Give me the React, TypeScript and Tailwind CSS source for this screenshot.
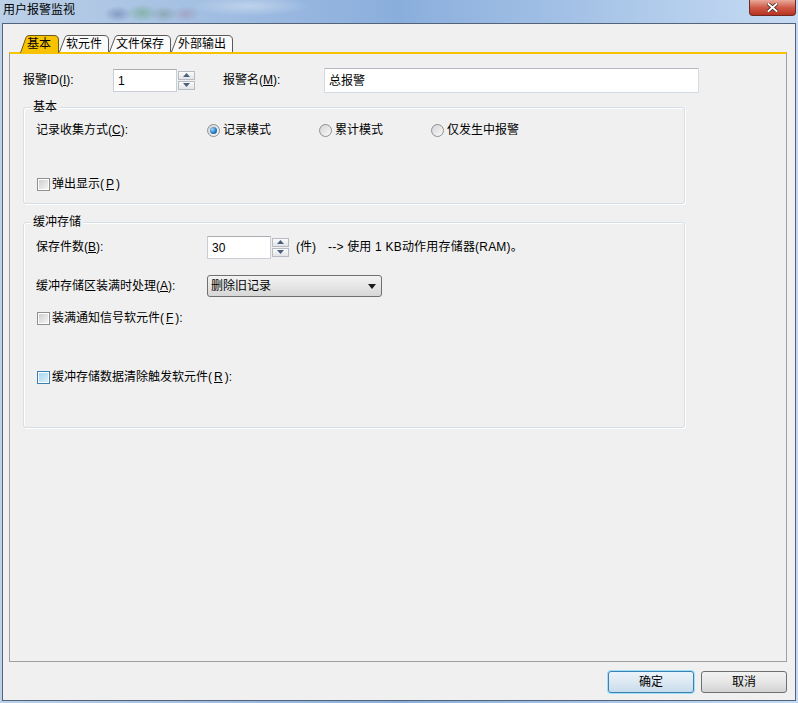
import React from 'react';

const Radio = ({ checked }: { checked?: boolean }) => (
    <span className="flex h-[13px] w-[13px] shrink-0 items-center justify-center rounded-full border border-[#8e8f8f] bg-gradient-to-br from-[#d4d4d4] to-[#fafafa]">
        {checked && (
            <span className="h-[7px] w-[7px] rounded-full bg-[radial-gradient(circle_at_35%_35%,#9ad9ff,#2a7cc0_55%,#0b3d73)]" />
        )}
    </span>
);

const Check = ({ hover }: { hover?: boolean }) => (
    <span
        className={`flex h-[13px] w-[13px] shrink-0 items-center justify-center border ${
            hover ? 'border-[#3c7fb1]' : 'border-[#8e8f8f]'
        } bg-white`}
    >
        <span
            className={`h-[9px] w-[9px] bg-gradient-to-br ${
                hover ? 'from-[#a9d8f2] to-[#d9effb]' : 'from-[#cfcfcf] to-[#f4f4f4]'
            }`}
        />
    </span>
);

const SpinBox = ({ value, width }: { value: string; width: string }) => (
    <div className={`flex h-[23px] ${width} items-stretch`}>
        <div className="flex flex-1 items-start border border-[#c9ced6] border-t-[#abadb3] bg-white pl-[4px] pt-[2px]">
            {value}
        </div>
        <div className="ml-[1px] flex w-[17px] flex-col gap-[1px] py-[2px]">
            <span className="flex flex-1 items-center justify-center border border-[#b7bcc3] bg-gradient-to-b from-[#fbfbfb] to-[#e2e4e8]">
                <svg width="7" height="4" viewBox="0 0 7 4">
                    <path d="M0 4 L3.5 0 L7 4 Z" fill="#4c5f7e" />
                </svg>
            </span>
            <span className="flex flex-1 items-center justify-center border border-[#b7bcc3] bg-gradient-to-b from-[#fbfbfb] to-[#e2e4e8]">
                <svg width="7" height="4" viewBox="0 0 7 4">
                    <path d="M0 0 L3.5 4 L7 0 Z" fill="#4c5f7e" />
                </svg>
            </span>
        </div>
    </div>
);

const Tab = ({
    label,
    width,
    selected,
}: {
    label: string;
    width: number;
    selected?: boolean;
}) => (
    <div className="relative flex h-[17px] shrink-0 items-center pl-[7px]" style={{ width }}>
        <svg
            className="absolute left-0 top-0"
            width={width}
            height={selected ? 18 : 17}
            viewBox={`0 0 ${width} ${selected ? 18 : 17}`}
        >
            <path
                d={`M0.5 ${selected ? 18 : 17} L6 2.5 Q6.8 0.5 9 0.5 L${width - 5} 0.5 Q${width - 0.5} 0.5 ${width - 0.5} 5 L${width - 0.5} ${selected ? 18 : 17}`}
                fill={selected ? '#f7c300' : '#fbfbfb'}
                stroke={selected ? '#6b5a1c' : '#5a5a5a'}
                strokeWidth="1"
            />
        </svg>
        <span className="relative leading-[14px]">{label}</span>
    </div>
);

const Group = ({
    title,
    className,
    children,
}: {
    title: string;
    className: string;
    children: React.ReactNode;
}) => (
    <div
        className={`relative ml-[13px] w-[662px] rounded-[3px] border border-[#d5dfe5] shadow-[inset_1px_1px_0_#ffffff,1px_1px_0_#ffffff] ${className}`}
    >
        <span className="absolute -top-[8px] left-[7px] bg-[#f0f0f0] px-[2px] leading-[14px]">
            {title}
        </span>
        {children}
    </div>
);

export default function App() {
    return (
        <div className="flex h-[703px] w-[798px] flex-col overflow-hidden bg-gradient-to-r from-[#bcd0e8] via-[#8aaedc] to-[#c6dbf3] font-['Liberation_Sans','Noto_Sans_CJK_SC',sans-serif] text-[12px] text-black">
            {/* 标题栏 */}
            <div className="relative flex h-[23px] shrink-0 items-start bg-[radial-gradient(ellipse_14px_8px_at_118px_14px,rgba(60,80,140,0.35),transparent),radial-gradient(ellipse_16px_9px_at_142px_13px,rgba(70,150,70,0.35),transparent),radial-gradient(ellipse_14px_8px_at_164px_14px,rgba(90,110,80,0.3),transparent),radial-gradient(ellipse_14px_8px_at_186px_14px,rgba(150,90,110,0.25),transparent),radial-gradient(ellipse_60px_10px_at_250px_6px,rgba(255,255,255,0.35),transparent)] pl-[3px] pt-[2px]">
                <span className="text-[12px] leading-[16px]">用户报警监视</span>
                <div className="absolute right-[2px] top-0 flex h-[16px] w-[47px] items-center justify-center rounded-b-[4px] border border-t-0 border-[#6e2a22] bg-gradient-to-b from-[#e9a99b] via-[#cf5a48] to-[#b8321f]">
                    <svg width="11" height="9" viewBox="0 0 11 9">
                        <path
                            d="M1.5 1 L9.5 8 M9.5 1 L1.5 8"
                            stroke="#3a1a16"
                            strokeWidth="3.4"
                            strokeLinecap="square"
                        />
                        <path
                            d="M1.5 1 L9.5 8 M9.5 1 L1.5 8"
                            stroke="#ffffff"
                            strokeWidth="2"
                            strokeLinecap="square"
                        />
                    </svg>
                </div>
            </div>

            {/* 客户区 */}
            <div className="mx-[2px] mb-[2px] flex flex-1 flex-col border border-[#53647a] bg-[#f0f0f0] pb-[6px] pl-[6px] pr-[8px] pt-[11px]">
                <div className="flex h-[17px] pl-[11px]">
                    <Tab label="基本" width={39} selected />
                    <Tab label="软元件" width={50} />
                    <Tab label="文件保存" width={62} />
                    <Tab label="外部输出" width={62} />
                </div>

                <div className="flex h-[610px] flex-col border border-[#a0a0a0] border-t-2 border-t-[#f7c300]">
                    {/* 第一行 */}
                    <div className="ml-[13px] mt-[14px] flex h-[24px] items-center">
                        <span className="w-[90px]">
                            报警ID(<u>I</u>):
                        </span>
                        <SpinBox value="1" width="w-[82px]" />
                        <span className="ml-[28px] w-[101px]">
                            报警名(<u>M</u>):
                        </span>
                        <div className="flex h-[25px] w-[375px] items-start border border-[#d5dbe2] border-t-[#b5bac2] bg-white pl-[4px] pt-[3px]">
                            总报警
                        </div>
                    </div>

                    {/* 基本 */}
                    <Group title="基本" className="mt-[15px] h-[97px] pl-[12px] pt-[12px]">
                        <div className="flex h-[20px] items-center">
                            <span className="w-[171px]">
                                记录收集方式(<u>C</u>):
                            </span>
                            <div className="flex w-[112px] items-center gap-[3px]">
                                <Radio checked />
                                记录模式
                            </div>
                            <div className="flex w-[112px] items-center gap-[3px]">
                                <Radio />
                                累计模式
                            </div>
                            <div className="flex items-center gap-[3px]">
                                <Radio />
                                仅发生中报警
                            </div>
                        </div>
                        <div className="ml-[1px] mt-[34px] flex h-[20px] items-center gap-[2px]">
                            <Check />
                            弹出显示(<u>P</u>)
                        </div>
                    </Group>

                    {/* 缓冲存储 */}
                    <Group title="缓冲存储" className="mt-[18px] h-[206px] pl-[12px] pt-[13px]">
                        <div className="flex h-[22px] items-center">
                            <span className="w-[171px]">
                                保存件数(<u>B</u>):
                            </span>
                            <SpinBox value="30" width="w-[82px]" />
                            <span className="ml-[7px]">(件)</span>
                            <span className="ml-[12px] tracking-[0.2px]">--&gt; 使用 1 KB动作用存储器(RAM)。</span>
                        </div>
                        <div className="mt-[17px] flex h-[22px] items-center">
                            <span className="w-[171px]">
                                缓冲存储区装满时处理(<u>A</u>):
                            </span>
                            <div className="flex h-[22px] w-[175px] items-center justify-between rounded-[3px] border border-[#707070] bg-gradient-to-b from-[#f3f3f3] via-[#e6e6e6] to-[#d6d6d6] pl-[3px] pr-[5px]">
                                <span>删除旧记录</span>
                                <svg width="8" height="5" viewBox="0 0 8 5">
                                    <path d="M0 0 L8 0 L4 5 Z" fill="#1a1a1a" />
                                </svg>
                            </div>
                        </div>
                        <div className="ml-[1px] mt-[11px] flex h-[20px] items-center gap-[2px]">
                            <Check />
                            装满通知信号软元件(<u>F</u>):
                        </div>
                        <div className="ml-[1px] mt-[39px] flex h-[20px] items-center gap-[2px]">
                            <Check hover />
                            缓冲存储数据清除触发软元件(<u>R</u>):
                        </div>
                    </Group>
                </div>

                {/* 按钮 */}
                <div className="mt-[9px] flex justify-end gap-[7px]">
                    <button className="flex h-[22px] w-[86px] items-center justify-center rounded-[3px] border border-[#3c7fb1] bg-gradient-to-b from-[#eaf3fa] via-[#dce8f2] to-[#c9dceb] shadow-[0_0_0_1px_#9be0f7]">
                        确定
                    </button>
                    <button className="flex h-[22px] w-[86px] items-center justify-center rounded-[3px] border border-[#707070] bg-gradient-to-b from-[#f2f2f2] via-[#e6e6e6] to-[#d3d3d3]">
                        取消
                    </button>
                </div>
            </div>
        </div>
    );
}
